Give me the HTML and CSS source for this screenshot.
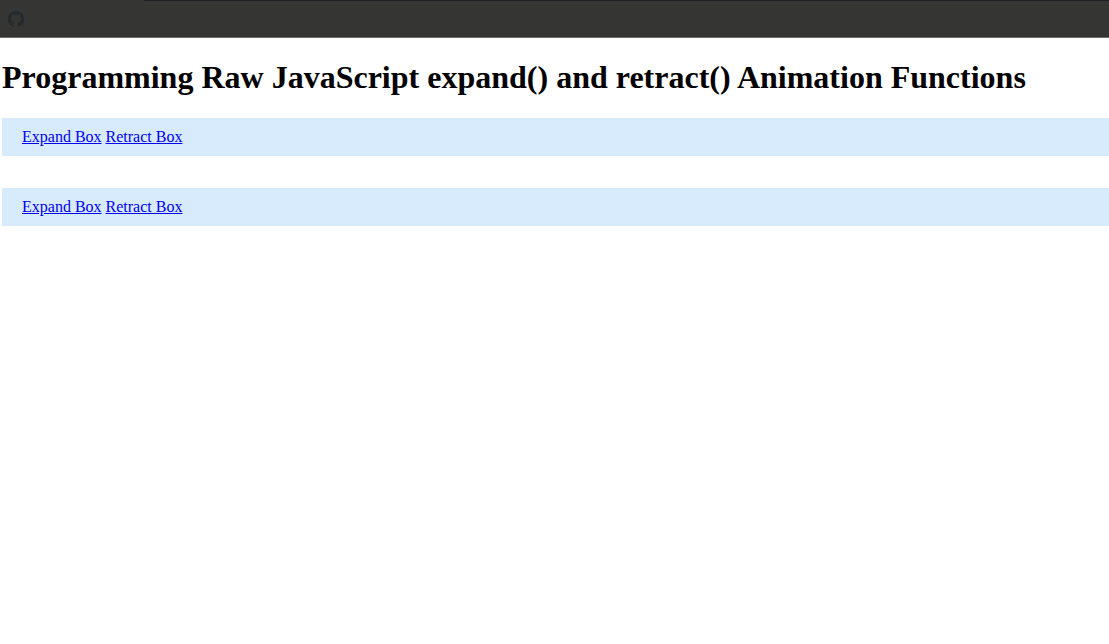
FILE: index.html
```html
<!DOCTYPE html>
<html lang="en">
<head>
<meta charset="utf-8">
<title>Programming Raw JavaScript expand() and retract() Animation Functions</title>
<link rel="stylesheet" href="styles.css">
</head>
<body>
<header class="toolbar">
<svg class="logo" viewBox="0 0 16 16" aria-hidden="true"><path d="M8 0C3.58 0 0 3.58 0 8c0 3.54 2.29 6.53 5.47 7.59.4.07.55-.17.55-.38v-1.49c-2.01.37-2.53-.49-2.69-.94-.09-.23-.48-.94-.82-1.13-.28-.15-.68-.52-.01-.53.63-.01 1.08.58 1.23.82.72 1.21 1.87.87 2.33.66.07-.52.28-.87.51-1.07-1.78-.2-3.64-.89-3.64-3.95 0-.87.31-1.59.82-2.15-.08-.2-.36-1.02.08-2.12 0 0 .67-.21 2.2.82a7.6 7.6 0 0 1 4 0c1.53-1.04 2.2-.82 2.2-.82.44 1.1.16 1.92.08 2.12.51.56.82 1.27.82 2.15 0 3.07-1.87 3.75-3.65 3.95.29.25.54.73.54 1.48v2.2c0 .21.15.46.55.38A8 8 0 0 0 16 8c0-4.42-3.58-8-8-8z"/></svg>
</header>
<main class="content">
<h1 class="title">Programming Raw JavaScript expand() and retract() Animation Functions</h1>
<div class="box"><a class="link" href="#">Expand Box</a> <a class="link" href="#">Retract Box</a></div>
<div class="box"><a class="link" href="#">Expand Box</a> <a class="link" href="#">Retract Box</a></div>
</main>
</body>
</html>
```

FILE: styles.css
```css
body { margin: 0; background: #fff; color: #000; font-family: "Liberation Serif", "Times New Roman", serif; font-size: 16px; overflow: hidden; }
.toolbar { box-sizing: border-box; height: 38px; padding: 11px 8px 10px; border-bottom: 1px solid #6b6b6a; background: linear-gradient(#202124, #202124) 144px 0 / 100% 1px no-repeat #353533; }
.logo { display: block; width: 16px; height: 16px; fill: #24292e; }
.content { padding-left: 2px; }
.title { margin: 0; padding: 21px 0 23px; font-size: 32px; line-height: 36px; letter-spacing: 0.003px; white-space: nowrap; }
.box { box-sizing: border-box; height: 38px; padding: 10px 20px; margin-bottom: 32px; background: #d8ebfd; line-height: 18px; }
.link { color: #0000ee; }
```
